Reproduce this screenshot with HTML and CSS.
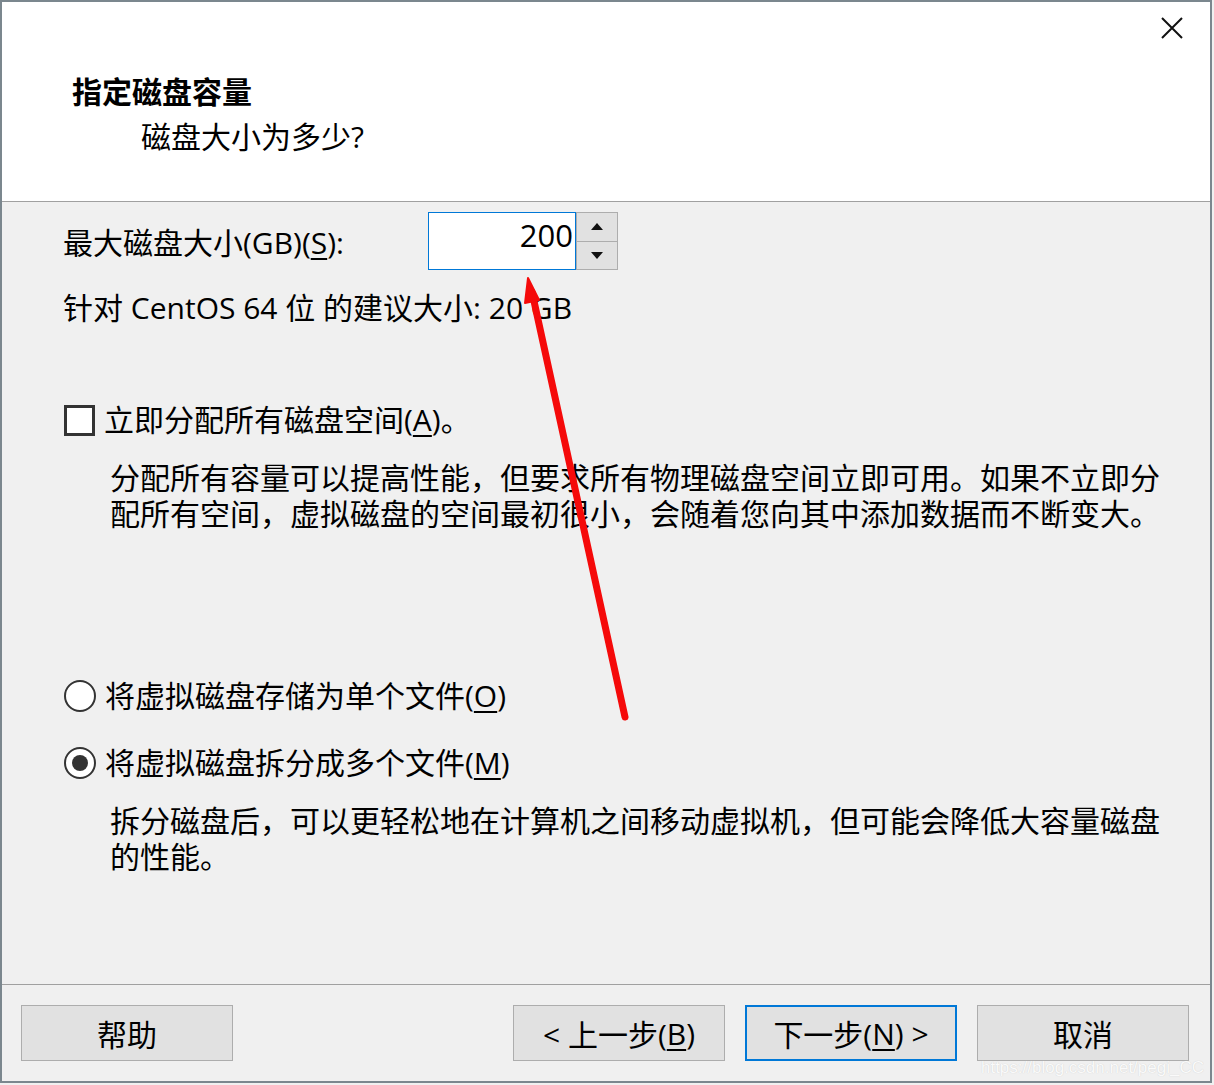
FILE: index.html
```html
<!DOCTYPE html>
<html lang="zh-CN">
<head>
<meta charset="utf-8">
<link rel="stylesheet" href="styles.css">
</head>
<body>
<div class="window">
  <div class="header">
    <div class="title">指定磁盘容量</div>
    <div class="subtitle">磁盘大小为多少?</div>
    <svg class="close" width="22" height="22" viewBox="0 0 22 22"><path d="M1 1 L21 21 M21 1 L1 21" stroke="#111" stroke-width="2" fill="none"/></svg>
  </div>
  <div class="body">
    <div class="size-row">
      <span class="label">最大磁盘大小(GB)(<u>S</u>):</span>
      <div class="spin">
        <div class="spin-input">200</div>
        <div class="spin-btns">
          <div class="spin-btn"><svg width="12" height="7" viewBox="0 0 12 7"><path d="M0 7 L6 0 L12 7Z" fill="#111"/></svg></div>
          <div class="spin-btn"><svg width="12" height="7" viewBox="0 0 12 7"><path d="M0 0 L6 7 L12 0Z" fill="#111"/></svg></div>
        </div>
      </div>
    </div>
    <div class="line rec">针对 CentOS 64 位 的建议大小: 20 GB</div>
    <div class="opt opt-check">
      <span class="checkbox"></span>
      <span>立即分配所有磁盘空间(<u>A</u>)。</span>
    </div>
    <p class="desc">分配所有容量可以提高性能，但要求所有物理磁盘空间立即可用。如果不立即分配所有空间，虚拟磁盘的空间最初很小，会随着您向其中添加数据而不断变大。</p>
    <div class="opt opt-r1">
      <span class="radio"></span>
      <span>将虚拟磁盘存储为单个文件(<u>O</u>)</span>
    </div>
    <div class="opt opt-r2">
      <span class="radio checked"></span>
      <span>将虚拟磁盘拆分成多个文件(<u>M</u>)</span>
    </div>
    <p class="desc">拆分磁盘后，可以更轻松地在计算机之间移动虚拟机，但可能会降低大容量磁盘的性能。</p>
  </div>
  <div class="footer">
    <div class="btn">帮助</div>
    <div class="btn-group">
      <div class="btn">&lt; 上一步(<u>B</u>)</div>
      <div class="btn primary">下一步(<u>N</u>) &gt;</div>
      <div class="btn">取消</div>
    </div>
  </div>
  <div class="watermark">https://blog.csdn.net/pegi_CC</div>
</div>
<svg class="arrow" width="1214" height="1085" viewBox="0 0 1214 1085">
  <path d="M625 717 L532 292" stroke="#f50a0a" stroke-width="7" stroke-linecap="round" fill="none"/>
  <path d="M528 278 L539 300 L525 303 Z" fill="#f50a0a" stroke="#f50a0a" stroke-width="2" stroke-linejoin="round"/>
</svg>
</body>
</html>
```
FILE: styles.css
```css
html, body {
  margin: 0;
  padding: 0;
  background: #f0f0f0;
}
body {
  width: 1214px;
  height: 1085px;
  position: relative;
  overflow: hidden;
  font-family: "Open Sans", "Noto Sans CJK SC", sans-serif;
  font-size: 30px;
  color: #000;
}
.window {
  position: relative;
  width: 1212px;
  height: 1083px;
  box-sizing: border-box;
  border: 2px solid #7b878e;
  display: flex;
  flex-direction: column;
  background: #f0f0f0;
}
.header {
  position: relative;
  height: 200px;
  box-sizing: border-box;
  background: #fff;
  border-bottom: 1px solid #a0a0a0;
  padding: 70px 0 0 70px;
}
.title {
  font-weight: bold;
  line-height: 40px;
  font-size: 30px;
}
.subtitle {
  line-height: 40px;
  margin-top: 5px;
  padding-left: 69px;
}
.close {
  position: absolute;
  right: 27px;
  top: 15px;
}
.body {
  flex: 1;
  padding: 10px 0 0 61px;
  border-bottom: 1px solid #a0a0a0;
}
.size-row {
  display: flex;
  align-items: center;
  height: 58px;
}
.label {
  width: 365px;
}
.spin {
  display: flex;
  height: 58px;
}
.spin-input {
  width: 148px;
  box-sizing: border-box;
  border: 1px solid #0078d7;
  background: #fff;
  text-align: right;
  padding-right: 2px;
  line-height: 44px;
  font-size: 31px;
}
.spin-btns {
  display: flex;
  flex-direction: column;
  gap: 1px;
  width: 42px;
  border: 1px solid #adadad;
  box-sizing: border-box;
  background: #adadad;
}
.spin-btn {
  flex: 1;
  background: #e1e1e1;
  display: flex;
  align-items: center;
  justify-content: center;
}
.line {
  line-height: 36px;
}
.rec {
  margin-top: 20px;
}
.opt {
  display: flex;
  align-items: center;
  gap: 9px;
  line-height: 36px;
  margin-left: 1px;
}
.opt-check {
  margin-top: 76px;
}
.checkbox {
  width: 31px;
  height: 31px;
  box-sizing: border-box;
  border: 3px solid #333;
  background: #fff;
}
.radio {
  width: 32px;
  height: 32px;
  box-sizing: border-box;
  border: 2px solid #333;
  border-radius: 50%;
  background: #fff;
  position: relative;
}
.radio.checked::after {
  content: "";
  position: absolute;
  left: 6px;
  top: 6px;
  width: 16px;
  height: 16px;
  border-radius: 50%;
  background: #333;
}
.desc {
  margin: 22px 0 0 47px;
  width: 1052px;
  line-height: 36px;
}
.opt-r1 {
  margin-top: 146px;
}
.opt-r2 {
  margin-top: 31px;
}
.footer {
  height: 96px;
  box-sizing: border-box;
  padding: 20px 21px 0 19px;
  display: flex;
  justify-content: space-between;
  align-items: flex-start;
}
.btn-group {
  display: flex;
  gap: 20px;
}
.btn {
  width: 212px;
  height: 56px;
  box-sizing: border-box;
  border: 1px solid #adadad;
  background: #e1e1e1;
  display: flex;
  align-items: center;
  justify-content: center;
}
.btn.primary {
  border: 2px solid #0078d7;
}
u {
  text-decoration-thickness: 2px;
  text-underline-offset: 4px;
}
.watermark {
  position: absolute;
  right: 6px;
  bottom: 3px;
  font-family: "Liberation Sans", Arial, sans-serif;
  font-size: 17px;
  color: #fafafa;
  text-shadow: 0 0 1px #c8c8c8;
}
.arrow {
  position: absolute;
  left: 0;
  top: 0;
  pointer-events: none;
}
```
